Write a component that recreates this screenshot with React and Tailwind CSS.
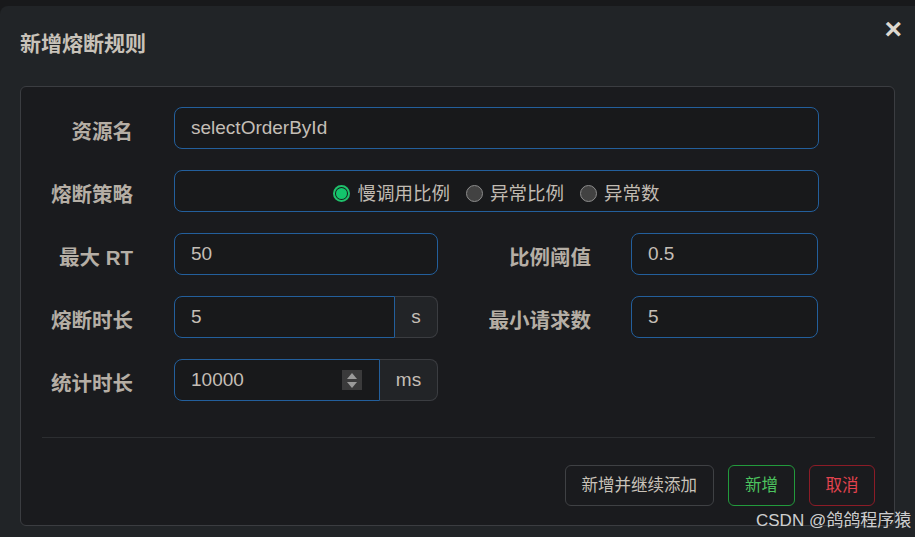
import React from 'react'

const cjk = { fontFamily: '"Liberation Sans", "Noto Sans CJK SC", sans-serif' }

function Label({ children, className = '' }) {
  return (
    <div className={`text-right text-[20.5px] font-bold text-[#b5aea5] pt-[10px] ${className}`}>
      {children}
    </div>
  )
}

function TextBox({ value, className = '' }) {
  return (
    <div className={`h-[42px] flex items-center px-[16px] rounded-[8px] border border-[#235f9c] bg-[#18191b] text-[19px] text-[#c4beb6] ${className}`}>
      {value}
    </div>
  )
}

function Radio({ checked, label }) {
  return (
    <label className="flex items-center gap-[7px]">
      {checked ? (
        <span className="w-[17px] h-[17px] rounded-full border-2 border-[#1fc16b] bg-[#18191b] flex items-center justify-center">
          <span className="w-[11px] h-[11px] rounded-full bg-[#13c46c]" />
        </span>
      ) : (
        <span className="w-[17px] h-[17px] rounded-full border-[1.5px] border-[#8c8c8c] bg-[#424242]" />
      )}
      <span>{label}</span>
    </label>
  )
}

export default function App() {
  return (
    <div className="relative w-[915px] h-[537px] bg-[#18191b] pt-[6px] overflow-hidden" style={cjk}>
      <div className="h-full bg-[#212427] rounded-tl-[8px] px-[20px] flex flex-col">
        <div className="h-[80px] flex items-start justify-between">
          <h1 className="mt-[22px] text-[21px] font-bold text-[#c8c2b9]">新增熔断规则</h1>
          <button className="mt-[8px] mr-[-7px] text-[30px] font-bold leading-none text-[#ddd8d0]">×</button>
        </div>

        <div className="flex-1 mb-[11px] rounded-[6px] border border-[#3b3d41] bg-[#1a1b1e] pt-[20px] pl-[21px] pr-[20px] flex flex-col">
          <div className="flex flex-col gap-[21px]">
            <div className="flex items-start">
              <Label className="w-[91px]">资源名</Label>
              <TextBox value="selectOrderById" className="ml-[41px] w-[645px]" />
            </div>

            <div className="flex items-start">
              <Label className="w-[91px]">熔断策略</Label>
              <div className="ml-[41px] w-[645px] h-[42px] pt-[5px] rounded-[8px] border border-[#235f9c] bg-[#18191b] flex items-center justify-center gap-[16px] text-[18.5px] text-[#c1bbb2]">
                <Radio checked label="慢调用比例" />
                <Radio label="异常比例" />
                <Radio label="异常数" />
              </div>
            </div>

            <div className="flex items-start">
              <Label className="w-[91px]">最大 RT</Label>
              <TextBox value="50" className="ml-[41px] w-[264px]" />
              <Label className="w-[153px]">比例阈值</Label>
              <TextBox value="0.5" className="ml-[40px] w-[187px]" />
            </div>

            <div className="flex items-start">
              <Label className="w-[91px]">熔断时长</Label>
              <div className="ml-[41px] w-[264px] h-[42px] flex">
                <div className="flex-1 flex items-center px-[16px] rounded-l-[8px] border border-[#235f9c] bg-[#18191b] text-[19px] text-[#c4beb6]">5</div>
                <div className="w-[43px] flex items-center justify-center rounded-r-[8px] border border-l-0 border-[#3b3d41] bg-[#222427] text-[19px] text-[#c4beb6]">s</div>
              </div>
              <Label className="w-[153px]">最小请求数</Label>
              <TextBox value="5" className="ml-[40px] w-[187px]" />
            </div>

            <div className="flex items-start">
              <Label className="w-[91px]">统计时长</Label>
              <div className="ml-[41px] w-[264px] h-[42px] flex">
                <div className="flex-1 flex items-center justify-between pl-[16px] pr-[17px] rounded-l-[8px] border border-[#235f9c] bg-[#18191b] text-[19px] text-[#c4beb6]">
                  <span>10000</span>
                  <span className="w-[20px] h-[20px] bg-[#3a3a3b] flex flex-col items-center justify-center gap-[3px]">
                    <svg width="10" height="6" viewBox="0 0 10 6"><path d="M5 0L10 6H0Z" fill="#9a9a9a" /></svg>
                    <svg width="10" height="6" viewBox="0 0 10 6"><path d="M0 0H10L5 6Z" fill="#9a9a9a" /></svg>
                  </span>
                </div>
                <div className="w-[58px] flex items-center justify-center rounded-r-[8px] border border-l-0 border-[#3b3d41] bg-[#222427] text-[19px] text-[#c4beb6]">ms</div>
              </div>
            </div>
          </div>

          <div className="mt-[36px] mr-[-1px] border-t border-[#2c2e31]" />

          <div className="mt-[27px] mr-[-1px] flex justify-end gap-[14px] text-[16.5px]">
            <button className="h-[41px] px-[16px] rounded-[6px] border border-[#3f4144] text-[#c8c2b9]">新增并继续添加</button>
            <button className="h-[41px] w-[67px] rounded-[6px] border border-[#229a3c] text-[#4cc45f]">新增</button>
            <button className="h-[41px] w-[66px] rounded-[6px] border border-[#8c1c27] text-[#e2434f]">取消</button>
          </div>
        </div>
      </div>

      <div className="absolute left-[756px] top-[508px] text-[17px] text-[#e6e6e6]/90">
        CSDN @鸽鸽程序猿
      </div>
    </div>
  )
}
